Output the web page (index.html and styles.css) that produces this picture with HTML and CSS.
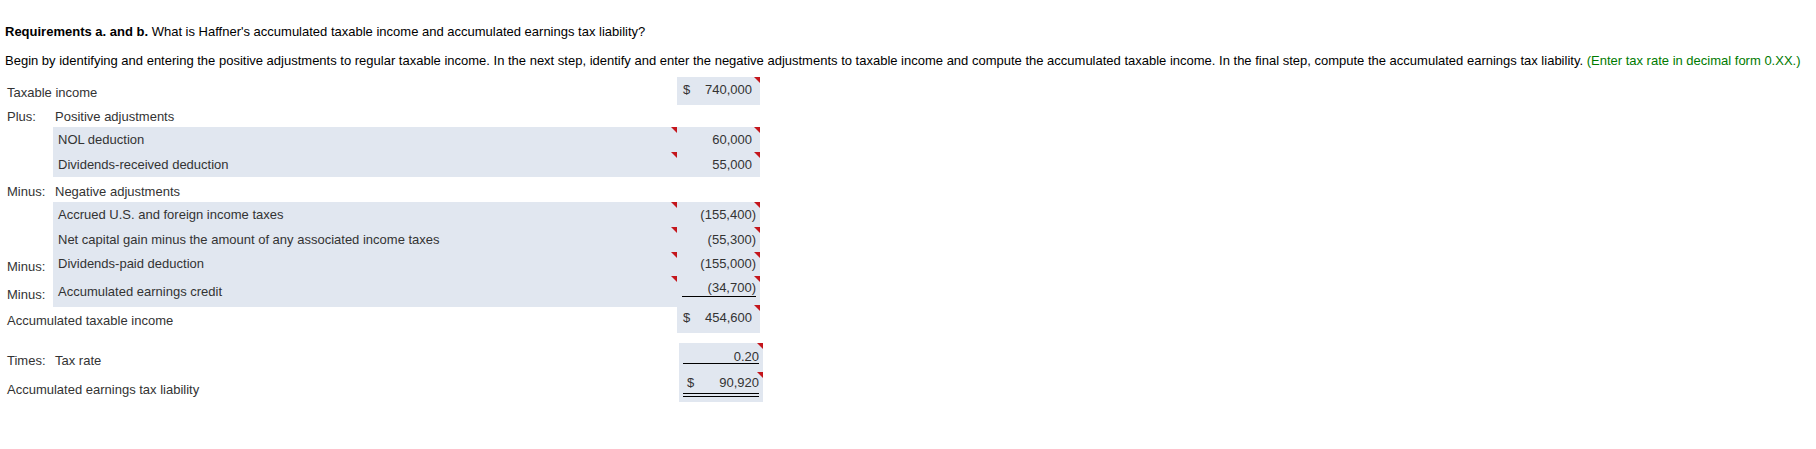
FILE: index.html
```html
<!DOCTYPE html>
<html>
<head>
<meta charset="utf-8">
<link rel="stylesheet" href="styles.css">
</head>
<body>
<div class="page">
  <p class="q"><b>Requirements a. and b.</b> What is Haffner's accumulated taxable income and accumulated earnings tax liability?</p>
  <p class="instr">Begin by identifying and entering the positive adjustments to regular taxable income. In the next step, identify and enter the negative adjustments to taxable income and compute the accumulated taxable income. In the final step, compute the accumulated earnings tax liability. <span class="green">(Enter tax rate in decimal form 0.XX.)</span></p>

  <div class="sheet">
    <div class="row">
      <div class="lbl wide low">Taxable income</div>
      <div class="amt box flag"><span class="cur">$</span><span class="num pos">740,000</span></div>
    </div>
    <div class="row">
      <div class="lbl low1">Plus:</div>
      <div class="head low1">Positive adjustments</div>
    </div>
    <div class="row">
      <div class="lbl"></div>
      <div class="desc band flag">NOL deduction</div>
      <div class="amt band flag"><span class="num pos">60,000</span></div>
    </div>
    <div class="row">
      <div class="lbl"></div>
      <div class="desc band flag">Dividends-received deduction</div>
      <div class="amt band flag"><span class="num pos">55,000</span></div>
    </div>
    <div class="row">
      <div class="lbl low1">Minus:</div>
      <div class="head low1">Negative adjustments</div>
    </div>
    <div class="row">
      <div class="lbl"></div>
      <div class="desc band flag">Accrued U.S. and foreign income taxes</div>
      <div class="amt band flag"><span class="num">(155,400)</span></div>
    </div>
    <div class="row">
      <div class="lbl"></div>
      <div class="desc band flag">Net capital gain minus the amount of any associated income taxes</div>
      <div class="amt band flag"><span class="num">(55,300)</span></div>
    </div>
    <div class="row short">
      <div class="lbl low">Minus:</div>
      <div class="desc band flag">Dividends-paid deduction</div>
      <div class="amt band flag"><span class="num">(155,000)</span></div>
    </div>
    <div class="row tall">
      <div class="lbl credit-lbl">Minus:</div>
      <div class="desc band flag credit-desc">Accumulated earnings credit</div>
      <div class="amt band flag credit-amt"><span class="uline"><span class="num">(34,700)</span></span></div>
    </div>
    <div class="row">
      <div class="lbl wide low">Accumulated taxable income</div>
      <div class="amt box flag"><span class="cur">$</span><span class="num pos">454,600</span></div>
    </div>

    <div class="rate">
      <div class="lbl r1">Times:</div>
      <div class="head r1">Tax rate</div>
      <div class="lbl wide r2">Accumulated earnings tax liability</div>
      <div class="ratebox">
        <div class="rline flag"><span class="num pos">0.20</span></div>
        <div class="rline dbl flag"><span class="cur">$</span><span class="num pos">90,920</span></div>
      </div>
    </div>
  </div>
</div>
</body>
</html>
```

FILE: styles.css
```css
* { box-sizing: border-box; }
html, body { margin: 0; padding: 0; background: #fff; }
body {
  font-family: "Liberation Sans", Arial, sans-serif;
  font-size: 13px;
  color: #000;
}
.page { padding: 0 5px; }
.q {
  margin: 0;
  padding-top: 24px;
  line-height: 16px;
  height: 53px;
  white-space: nowrap;
}
.q b { font-weight: bold; }
.instr {
  margin: 0;
  line-height: 16px;
  height: 24px;
  white-space: nowrap;
}
.green { color: #007a00; }

.sheet {
  margin-left: 2px;
  color: #333;
}
.row {
  display: grid;
  grid-template-columns: 46px 624px 83px;
  height: 25px;
  line-height: 25px;
}
.row.short { height: 24px; line-height: 24px; }
.row.tall { height: 29px; line-height: 24px; }

.lbl { white-space: nowrap; }
.lbl.wide { grid-column: 1 / span 2; }
.low { padding-top: 3px; }
.low1 { padding-top: 2px; }
.head { padding-left: 2px; white-space: nowrap; }
.desc { padding-left: 5px; white-space: nowrap; }
.band { background: #e1e7f0; }
.box { background: #e1e7f0; }

.amt {
  display: flex;
  justify-content: space-between;
  padding-left: 6px;
  padding-right: 4px;
  grid-column: 3;
}
.amt .num { margin-left: auto; }
.num.pos { padding-right: 4px; }

.flag { position: relative; }
.flag::after {
  content: "";
  position: absolute;
  top: 0;
  right: 0;
  width: 0;
  height: 0;
  border-top: 6px solid #c4161c;
  border-left: 6px solid transparent;
}

.credit-lbl { padding-top: 7px; }
.credit-desc { padding-top: 4px; }
.credit-amt { padding-left: 5px; }
.uline {
  display: block;
  width: 100%;
  height: 21px;
  line-height: 23px;
  border-bottom: 1px solid #000;
  text-align: right;
}

.rate {
  display: grid;
  grid-template-columns: 46px 626px 84px;
  grid-template-rows: 27px 32px;
  margin-top: 13px;
  line-height: 16px;
}
.r1 { padding-top: 10px; }
.head.r1 { grid-column: 2; grid-row: 1; }
.lbl.r2 { grid-row: 2; padding-top: 12px; }
.ratebox {
  grid-column: 3;
  grid-row: 1 / span 2;
  background: #e1e7f0;
  padding: 0 4px;
  position: relative;
}
.rline {
  display: flex;
  position: static;
}
.rline .num { margin-left: auto; }
.rline:first-child {
  height: 21px;
  padding-top: 6px;
  border-bottom: 1px solid #000;
  padding-left: 4px;
}
.rline.dbl {
  height: 33px;
  padding-top: 11px;
  border-bottom: 4px double #000;
  padding-left: 4px;
}
.rline .num.pos { padding-right: 0; }
.ratebox .rline.flag::after { right: 0; }
.ratebox .rline:first-child::after { top: 0; }
.ratebox .rline.dbl::after { top: 29px; }
```
